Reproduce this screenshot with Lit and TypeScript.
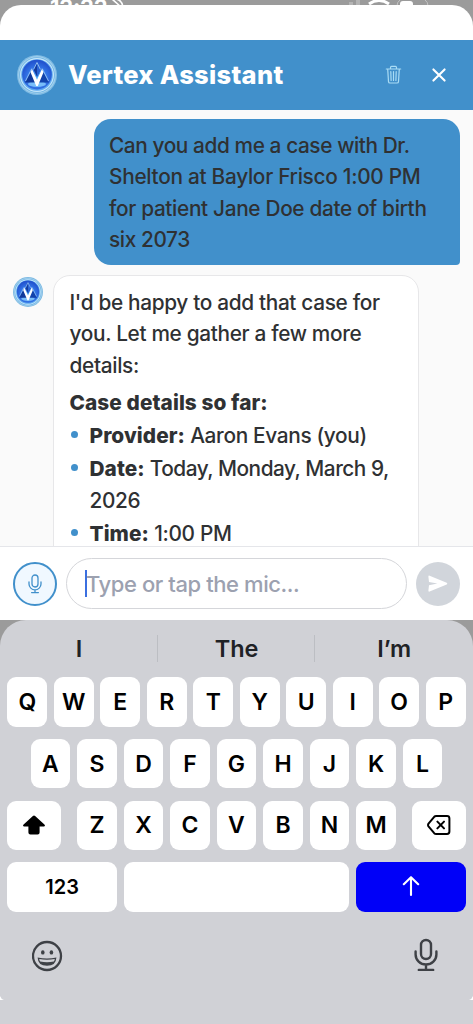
import { LitElement, html, css } from "lit";
import { customElement } from "lit/decorators.js";

@customElement("vertex-logo")
class VertexLogo extends LitElement {
  static styles = css`
    :host { display: block; }
    svg { display: block; width: 100%; height: 100%; }
  `;
  render() {
    return html`<svg viewBox="0 0 40 40">
      <defs>
        <radialGradient id="g" cx=".5" cy=".6" r=".55">
          <stop offset="0" stop-color="#58b4fb" />
          <stop offset=".55" stop-color="#3579ea" />
          <stop offset="1" stop-color="#2354cf" />
        </radialGradient>
      </defs>
      <circle cx="20" cy="20" r="20" fill="#7fbbe3" />
      <circle cx="20" cy="20" r="18.8" fill="#a5d2ee" />
      <circle cx="20" cy="20" r="17.8" fill="#6db2e2" />
      <circle cx="20" cy="20" r="17" fill="#c4e6fa" />
      <circle cx="20" cy="20" r="15.8" fill="#5ea9f0" />
      <circle cx="20" cy="19.6" r="14.8" fill="url(#g)" />
      <ellipse cx="20" cy="29" rx="9" ry="3" fill="#8fd4ff" opacity=".75" />
      <path d="M8 27.5 14.4 15.5 20 27.5Z" fill="#103a9c" />
      <path d="M32 27.5 25.6 15.5 20 27.5Z" fill="#1243ac" />
      <path d="M20 7.5 16.6 14.5 20 22 23.4 14.5Z" fill="#123b9f" />
      <path d="M20 7.5 23.4 14.5 20 22Z" fill="#2a63d4" />
      <path d="M13.6 17.6 14.9 13.8 20 24.8 25.1 13.8 26.4 17.6 20.8 31H19.2Z" fill="#fff" />
      <path d="M14.8 13.6 8.5 26M25.2 13.6 31.5 26M16.6 14.5 20 7.5 23.4 14.5" fill="none" stroke="#a9d6fa" stroke-width=".8" />
    </svg>`;
  }
}

@customElement("status-bar")
class StatusBar extends LitElement {
  static styles = css`
    :host { display: block; height: 39.5px; background: #9b9b9b; position: relative; }
    .time { position: absolute; left: 50px; top: 0; font-size: 22px; line-height: 15px; font-weight: 700; letter-spacing: -0.2px; color: #fff; }
    .icons { position: absolute; left: 0; top: 0; }
    .sheet { position: absolute; inset: 5px 0 0 0; background: #fff; border-radius: 21px 21px 0 0; }
  `;
  render() {
    return html`
      <div class="time">12:22</div>
      <svg class="icons" width="473" height="8">
        <path d="M112-1 121 7M116-1Q122 0 123 7" fill="none" stroke="#fff" stroke-width="1.6" />
        <path d="M349 2h4v5h-4zM356-2h4v9h-4z" fill="#b4b4b4" />
        <path d="M369 4Q379-3 389 4" fill="none" stroke="#fff" stroke-width="3" />
        <path d="M400 6V4Q400 1 403 1H410Q413 1 413 4V6Z" fill="#fff" />
        <path d="M400 0Q397 2 397 6M425 0Q428 2 428 6" fill="none" stroke="#c4c4c4" stroke-width="1" />
      </svg>
      <div class="sheet"></div>`;
  }
}

@customElement("chat-header")
class ChatHeader extends LitElement {
  static styles = css`
    :host { display: flex; align-items: center; height: 70px; box-sizing: border-box; padding: 0 26px 0 17px; background: #4190cb; color: #fff; }
    vertex-logo { width: 40px; height: 40px; }
    h1 { margin: 0 0 0 11px; font-size: 25.5px; font-weight: 850; line-height: 30px; letter-spacing: 0.3px; flex: 1; white-space: nowrap; }
    .actions { display: flex; align-items: center; gap: 29px; }
    svg { display: block; }
  `;
  render() {
    return html`
      <vertex-logo></vertex-logo>
      <h1>Vertex Assistant</h1>
      <div class="actions">
        <svg width="17" height="20" viewBox="0 0 16 20" fill="none" stroke="#a9dcf5" stroke-width="1.2" stroke-linecap="round" stroke-linejoin="round">
          <path d="M.8 4H15.2M5 4V2.4Q5 1.3 6.1 1.3H9.9Q11 1.3 11 2.4V4M2.2 4 3 16.6Q3.1 18 4.5 18H11.5Q12.9 18 13 16.6L13.8 4M5.3 6.6 5.6 15.4M8 6.6V15.4M10.7 6.6 10.4 15.4" />
        </svg>
        <svg width="16" height="16" viewBox="0 0 16 16" stroke="#fff" stroke-width="2.1" stroke-linecap="round"><path d="M2.4 2.4 13.6 13.6M13.6 2.4 2.4 13.6" /></svg>
      </div>`;
  }
}

@customElement("chat-thread")
class ChatThread extends LitElement {
  static styles = css`
    :host { display: flex; flex-direction: column; height: 436.5px; overflow: hidden; box-sizing: border-box; padding: 9px 13px 0; background: #fafafa; color: #2f3133; font-size: 20.8px; line-height: 31.3px; font-weight: 500; letter-spacing: -0.33px; }
    .user { align-self: flex-end; width: 366px; height: 146.5px; box-sizing: border-box; padding: 11.5px 15px; background: #4190cb; border-radius: 17px 17px 4px 17px; flex: none; }
    .reply { display: flex; align-items: flex-start; gap: 10px; margin-top: 9.5px; }
    vertex-logo { width: 30px; height: 30px; margin-top: 2px; }
    .bot { width: 366px; height: 300px; flex: none; box-sizing: border-box; padding: 11.5px 15.5px; background: #fff; border: 1px solid #e7e7e9; border-radius: 17px; }
    .line { display: block; white-space: nowrap; }
    .tight { letter-spacing: -0.4px; }
    .loose { letter-spacing: -0.28px; }
    .date { letter-spacing: -0.48px; }
    p, ul { margin: 0; padding: 0; list-style: none; }
    b { font-weight: 850; letter-spacing: 0.08px; }
    .heading { margin-top: 6px; }
    li { position: relative; padding-left: 20px; margin-top: 2px; }
    li::before { content: ""; position: absolute; left: 1px; top: 11px; width: 7px; height: 7px; border-radius: 50%; background: #4190cb; }
  `;
  render() {
    return html`
      <div class="user">
        <span class="line tight">Can you add me a case with Dr.</span>
        <span class="line loose">Shelton at Baylor Frisco 1:00 PM</span>
        <span class="line">for patient Jane Doe date of birth</span>
        <span class="line tight">six 2073</span>
      </div>
      <div class="reply">
        <vertex-logo></vertex-logo>
        <div class="bot">
          <p>
            <span class="line">I'd be happy to add that case for</span>
            <span class="line">you. Let me gather a few more</span>
            <span class="line">details:</span>
          </p>
          <p class="heading"><b>Case details so far:</b></p>
          <ul>
            <li><span class="line"><b>Provider:</b> Aaron Evans (you)</span></li>
            <li><span class="line date"><b>Date:</b> Today, Monday, March 9,</span><span class="line">2026</span></li>
            <li><span class="line"><b>Time:</b> 1:00 PM</span></li>
          </ul>
        </div>
      </div>`;
  }
}

@customElement("chat-composer")
class ChatComposer extends LitElement {
  static styles = css`
    :host { display: flex; align-items: center; gap: 9px; height: 74px; box-sizing: border-box; padding: 0 13px; background: #fff; border-top: 1px solid #e5e6ea; }
    .mic { width: 44px; height: 44px; box-sizing: border-box; border: 2px solid #4190cb; border-radius: 50%; background: #f0f8ff; display: grid; place-items: center; }
    .field { flex: 1; height: 51px; box-sizing: border-box; border: 1px solid #d5d6da; border-radius: 26px; display: flex; align-items: center; padding-left: 18px; }
    .caret { width: 2px; height: 27px; background: #3b6fe0; }
    .hint { color: #9ca1b0; font-size: 22px; font-weight: 530; letter-spacing: -0.42px; margin-left: -1px; white-space: nowrap; }
    .send { width: 44px; height: 44px; border-radius: 50%; background: #d1d5db; display: grid; place-items: center; }
    svg { display: block; }
  `;
  render() {
    return html`
      <div class="mic">
        <svg width="14" height="20" viewBox="0 0 14 20" fill="none" stroke="#4190cb" stroke-width="1.3" stroke-linecap="round">
          <rect x="4" y="1" width="6" height="12" rx="3" />
          <path d="M1 8V10A6 5.8 0 0 0 13 10V8M7 16V18.6M3.6 18.6H10.4" />
        </svg>
      </div>
      <div class="field"><span class="caret"></span><span class="hint">Type or tap the mic...</span></div>
      <div class="send">
        <svg width="20" height="18" viewBox="0 0 20 18"><path d="M1.6.7 18.7 7.8Q20 8.6 18.7 9.4L1.6 16.6Q.2 17 .4 15.6L1 10.3 9.4 8.6 1 7 .4 1.7Q.3.3 1.6.7Z" fill="#fff" /></svg>
      </div>`;
  }
}

@customElement("touch-keyboard")
class TouchKeyboard extends LitElement {
  static styles = css`
    :host { display: block; height: 404px; background: #9b9b9b; }
    .panel { height: 100%; box-sizing: border-box; border-radius: 26px 26px 0 0; background: #d0d1d6; color: #000; display: flex; flex-direction: column; position: relative; }
    .suggest { display: grid; grid-template-columns: repeat(3, 1fr); height: 57.4px; flex: none; color: #1f2226; }
    .word { display: flex; align-items: center; justify-content: center; height: 27px; margin-top: 14.5px; font-size: 23.5px; font-weight: 560; letter-spacing: -0.1px; box-shadow: -1px 0 #bcbec3; }
    .word:first-child { box-shadow: none; }
    .rows { display: flex; flex-direction: column; gap: 12.2px; padding: 0 7.4px; }
    .row { display: flex; gap: 6.7px; height: 49.4px; }
    .r2 { padding: 0 23.2px; }
    .key { flex: 1 1 0; min-width: 0; background: #fff; border-radius: 9px; display: grid; place-items: center; font-size: 23px; font-weight: 600; }
    .wide { flex: 0 0 53.6px; }
    .shift { margin-right: 9.3px; }
    .del { margin-left: 9.3px; }
    .num { flex: 0 0 109.6px; font-size: 20px; }
    .go { flex: 0 0 110px; background: #0000f8; }
    .foot { display: flex; justify-content: space-between; padding: 26px 35px 0 32px; }
    .corners { position: absolute; left: 0; bottom: 24px; width: 100%; height: 4px; }
    svg { display: block; }
  `;
  keys(s: string) {
    return s.split("").map((k) => html`<div class="key">${k}</div>`);
  }
  render() {
    return html`<div class="panel">
      <div class="suggest"><div class="word">I</div><div class="word">The</div><div class="word">I’m</div></div>
      <div class="rows">
        <div class="row">${this.keys("QWERTYUIOP")}</div>
        <div class="row r2">${this.keys("ASDFGHJKL")}</div>
        <div class="row">
          <div class="key wide shift">
            <svg width="24" height="22" viewBox="0 0 24 22"><path d="M10.9 2Q12 1 13.1 2L22.4 10.5Q23.8 12.2 21.8 12.4H17.6V18.4Q17.6 20.4 15.6 20.4H8.4Q6.4 20.4 6.4 18.4V12.4H2.2Q.2 12.2 1.6 10.5Z" /></svg>
          </div>
          ${this.keys("ZXCVBNM")}
          <div class="key wide del">
            <svg width="24" height="20" viewBox="0 0 24 20" fill="none" stroke="#000" stroke-width="2" stroke-linejoin="round" stroke-linecap="round">
              <path d="M9.2 1H20Q22.4 1 22.4 3.4V16.6Q22.4 19 20 19H9.2Q8 19 7.2 18.2L1.5 11.4Q.6 10 1.5 8.6L7.2 1.8Q8 1 9.2 1ZM10.4 6.6 17 13.4M17 6.6 10.4 13.4" />
            </svg>
          </div>
        </div>
        <div class="row">
          <div class="key num">123</div>
          <div class="key"></div>
          <div class="key go">
            <svg width="18" height="22" viewBox="0 0 18 22" fill="none" stroke="#fff" stroke-width="2.1" stroke-linecap="round" stroke-linejoin="round"><path d="M9 19V1.2M1.8 8.2 9 1.2 16.2 8.2" /></svg>
          </div>
        </div>
      </div>
      <div class="foot">
        <svg width="31" height="34" viewBox="0 0 31 34">
          <circle cx="15" cy="18" r="14" fill="none" stroke="#3e4146" stroke-width="2.3" />
          <ellipse cx="10.8" cy="14.4" rx="1.8" ry="2.2" fill="#3e4146" />
          <ellipse cx="19.4" cy="14.4" rx="1.8" ry="2.2" fill="#3e4146" />
          <path d="M5.6 19.4Q15 21.6 24.4 19.4Q24 27.8 15 27.8Q6 27.8 5.6 19.4Z" fill="#3e4146" />
          <path d="M7.2 21Q15 22.6 22.8 21Q22.6 22.6 21.8 23.4Q15 25 8.2 23.4Q7.4 22.6 7.2 21Z" fill="#d0d1d6" />
        </svg>
        <svg width="24" height="34" viewBox="0 0 24 34" fill="none" stroke="#3e4146" stroke-width="2.4" stroke-linecap="round">
          <rect x="7" y="2" width="10" height="19" rx="5" />
          <path d="M1.6 13.5V16.5A10.4 10 0 0 0 22.4 16.5V13.5M12 27V31.6M4.8 31.9H19.2" />
        </svg>
      </div>
      <svg class="corners" viewBox="0 0 473 4"><path d="M0 0Q1 3 4 4H0ZM473 0Q472 3 469 4H473Z" fill="#fff" /></svg>
    </div>`;
  }
}

@customElement("app-root")
class AppRoot extends LitElement {
  static styles = css`
    :host { display: flex; flex-direction: column; height: 1024px; overflow: hidden; font-family: Inter, "Liberation Sans", sans-serif; }
    status-bar, chat-header, chat-thread, chat-composer, touch-keyboard { flex: none; }
  `;
  render() {
    return html`<status-bar></status-bar><chat-header></chat-header><chat-thread></chat-thread><chat-composer></chat-composer><touch-keyboard></touch-keyboard>`;
  }
}
